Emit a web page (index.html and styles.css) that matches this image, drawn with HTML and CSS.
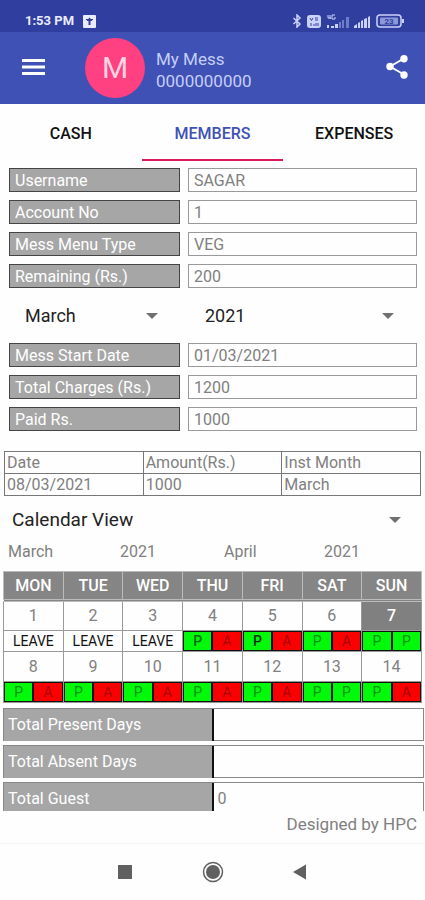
FILE: index.html
```html
<!DOCTYPE html>
<html lang="en">
<head>
<meta charset="utf-8">
<meta name="viewport" content="width=device-width, initial-scale=1">
<title>My Mess</title>
<link rel="stylesheet" href="styles.css">
</head>
<body>
<div class="app">
  <div class="status">
    <span class="clock">1:53 PM</span>
    <svg class="notice" width="13" height="13" viewBox="0 0 13 13"><rect width="13" height="13" rx="1" fill="#e9ecff"/><path d="M6.500 2.500 9.500 6H7.500v4h-2V6h-2z" fill="#303f9f"/><path d="M3 4.500h7" stroke="#303f9f"/></svg>
    <div class="signals">
      <svg width="10" height="14" viewBox="0 0 10 14" fill="none" stroke="#cbd2fa" stroke-width="1.500"><path d="M1.500 4 8 10 5 13V1l3 3-6.500 6"/></svg>
      <svg width="14" height="13" viewBox="0 0 14 13"><rect width="14" height="13" rx="3" fill="#cbd2fa"/><path d="M3 3l1.500 2.500L6 3M8 3h3M8 5h3M4 8v3M6 10h2M9 8v3M11 8v3" stroke="#303f9f" fill="none"/></svg>
      <svg width="23" height="15" viewBox="0 0 23 15"><path d="M2 1v3h3M4 1v4M9 1H6v4h3V3" stroke="#cbd2fa" fill="none"/><path d="M1 11h2v3H1zM5 12h3v2H5zM9 10h3v4H9z" fill="#cbd2fa"/><path d="M13 8h2v6h-2zM16 6h2v8h-2zM20 3h3v11h-3z" fill="#6f7cc7"/></svg>
      <svg width="17" height="13" viewBox="0 0 17 13" fill="#cbd2fa"><path d="M0 13v-2l3-2v4zM4 13V8l2-1v6zM7 13V6l2-1v8zM10 13V4l3-1v10zM14 13V2l2-1v12z"/></svg>
      <svg width="29" height="14" viewBox="0 0 29 14"><rect x="1" y="1" width="24" height="12" rx="3" fill="none" stroke="#cbd2fa" stroke-width="1.500"/><rect x="4" y="3.500" width="18" height="7" rx="1" fill="#8d98d8"/><path d="M26 5h2v4h-2z" fill="#cbd2fa"/><text x="13" y="10" text-anchor="middle" class="battery-text">23</text></svg>
    </div>
  </div>
  <header class="bar">
    <button class="icon-button" type="button" aria-label="Menu"><svg width="24" height="18" viewBox="0 0 24 18" fill="#fff"><path d="M0 0h23v3H0zM0 6.500h23v3H0zM0 13h23v3H0z"/></svg></button>
    <span class="avatar">M</span>
    <div class="account"><span>My Mess</span><span>0000000000</span></div>
    <button class="icon-button" type="button" aria-label="Share"><svg width="24" height="26" viewBox="0 0 24 26"><path d="M19 3.500 5 11.500l14 8" fill="none" stroke="#fff" stroke-width="2"/><g fill="#fff"><circle cx="19" cy="3.800" r="3.700"/><circle cx="5" cy="11.500" r="3.700"/><circle cx="19" cy="20" r="3.700"/></g></svg></button>
  </header>
  <nav class="tabs">
    <a href="#cash">CASH</a>
    <a href="#members" class="current" aria-current="page">MEMBERS</a>
    <a href="#expenses">EXPENSES</a>
  </nav>
  <main class="content">
    <section class="fields">
      <label for="username">Username</label><input id="username" value="SAGAR" readonly>
      <label for="account">Account No</label><input id="account" value="1" readonly>
      <label for="menu">Mess Menu Type</label><input id="menu" value="VEG" readonly>
      <label for="remaining">Remaining (Rs.)</label><input id="remaining" value="200" readonly>
    </section>
    <section class="period">
      <div class="spinner"><select aria-label="Month"><option>March</option></select></div>
      <div class="spinner"><select aria-label="Year"><option>2021</option></select></div>
    </section>
    <section class="fields">
      <label for="start">Mess Start Date</label><input id="start" value="01/03/2021" readonly>
      <label for="charges">Total Charges (Rs.)</label><input id="charges" value="1200" readonly>
      <label for="paid">Paid Rs.</label><input id="paid" value="1000" readonly>
    </section>
    <table class="payments">
      <thead><tr><th>Date</th><th>Amount(Rs.)</th><th>Inst Month</th></tr></thead>
      <tbody><tr><td>08/03/2021</td><td>1000</td><td>March</td></tr></tbody>
    </table>
    <div class="spinner view"><select aria-label="View"><option>Calendar View</option></select></div>
    <div class="range"><span>March</span><span>2021</span><span>April</span><span>2021</span></div>
    <table class="calendar">
      <thead><tr><th>MON</th><th>TUE</th><th>WED</th><th>THU</th><th>FRI</th><th>SAT</th><th>SUN</th></tr></thead>
      <tbody>
        <tr class="days"><td>1</td><td>2</td><td>3</td><td>4</td><td>5</td><td>6</td><td class="today">7</td></tr>
        <tr class="marks">
          <td>LEAVE</td><td>LEAVE</td><td>LEAVE</td>
          <td><div class="pair"><b class="p strong">P</b><b class="a">A</b></div></td>
          <td><div class="pair"><b class="p dark">P</b><b class="a">A</b></div></td>
          <td><div class="pair"><b class="p">P</b><b class="a">A</b></div></td>
          <td><div class="pair"><b class="p">P</b><b class="p">P</b></div></td>
        </tr>
        <tr class="days"><td>8</td><td>9</td><td>10</td><td>11</td><td>12</td><td>13</td><td>14</td></tr>
        <tr class="marks">
          <td><div class="pair"><b class="p">P</b><b class="a">A</b></div></td>
          <td><div class="pair"><b class="p">P</b><b class="a">A</b></div></td>
          <td><div class="pair"><b class="p">P</b><b class="a">A</b></div></td>
          <td><div class="pair"><b class="p">P</b><b class="a">A</b></div></td>
          <td><div class="pair"><b class="p">P</b><b class="a">A</b></div></td>
          <td><div class="pair"><b class="p">P</b><b class="p">P</b></div></td>
          <td><div class="pair"><b class="p">P</b><b class="a">A</b></div></td>
        </tr>
      </tbody>
    </table>
    <section class="totals">
      <div class="total"><label for="present">Total Present Days</label><input id="present" readonly></div>
      <div class="total"><label for="absent">Total Absent Days</label><input id="absent" readonly></div>
      <div class="total"><label for="guest">Total Guest</label><input id="guest" value="0" readonly></div>
    </section>
  </main>
  <footer class="credit">Designed by HPC</footer>
  <div class="system">
    <button type="button" aria-label="Recent apps"><svg width="22" height="22" viewBox="0 0 22 22"><path d="M4 4h14v14H4z" fill="#606060"/></svg></button>
    <button type="button" aria-label="Home"><svg width="22" height="22" viewBox="0 0 22 22"><circle cx="11" cy="11" r="9.500" fill="none" stroke="#606060" stroke-width="1.500"/><circle cx="11" cy="11" r="7" fill="#606060"/></svg></button>
    <button type="button" aria-label="Back"><svg width="22" height="22" viewBox="0 0 22 22"><path d="M16 3.500v15L3 11z" fill="#606060"/></svg></button>
  </div>
</div>
</body>
</html>
```
FILE: styles.css
```css
* { box-sizing: border-box; }
body { margin: 0; background: #fefefe; color: #808080; font: 16px/20px Roboto, sans-serif; }
button, input, select { font: inherit; color: inherit; border: 0; padding: 0; margin: 0; background: none; border-radius: 0; }
svg { display: block; }
.app { display: flex; flex-direction: column; height: 100vh; }

.status { display: flex; align-items: center; height: 32px; padding: 10px 20px 0 25px; background: #303f9f; color: #e9ecff; }
.clock { font-size: 13px; font-weight: 700; }
.notice { margin-left: 9px; }
.signals { display: flex; align-items: center; gap: 5px; margin-left: auto; }
.battery-text { font-size: 8px; font-weight: 700; fill: #303f9f; }

.bar { display: flex; align-items: center; height: 72px; padding: 0 16px 0 22px; background: #3f51b5; }
.icon-button { display: flex; }
.avatar { display: grid; place-items: center; width: 60px; height: 60px; margin: 0 11px 0 39px; border-radius: 50%; background: #ff4081; color: #ffd3e2; font-size: 30px; }
.account { display: flex; flex: 1; flex-direction: column; gap: 2px; padding-top: 3px; color: #c5cefa; font-size: 17px; }

.tabs { display: grid; grid-template-columns: repeat(3, 1fr); height: 57px; }
.tabs a { display: grid; place-items: center; padding-top: 4px; border-bottom: 2px solid transparent; color: #111; font-weight: 500; text-decoration: none; }
.tabs .current { border-color: #d81b60; color: #3f51b5; }

.content { flex: 1; min-height: 0; overflow: hidden; padding-top: 7px; }
.fields { display: grid; grid-template-columns: 171px 1fr; gap: 8px; padding: 0 8px 0 9px; }
.fields label { height: 24px; padding: 2px 5px 0; border: 1px solid #444; background: #a6a6a6; color: #fff; line-height: 20px; }
.fields input { height: 24px; min-width: 0; padding: 1px 5px 0; border: 1px solid #999; }

.period { display: grid; grid-template-columns: 180px 1fr; height: 55px; }
.spinner { display: grid; grid-template-columns: 1fr 12px; align-items: center; padding: 0 22px 0 25px; color: #222; font-size: 18px; }
.spinner select { grid-area: 1 / 1 / 2 / 3; appearance: none; width: 100%; }
.spinner::after { content: ""; grid-area: 1 / 2; border: 6px solid transparent; border-top-color: #707070; border-bottom: 0; pointer-events: none; }

.payments { width: calc(100% - 8px); margin: 20px 4px 0; border-collapse: collapse; table-layout: fixed; }
.payments th, .payments td { height: 22px; padding: 0 2px; border: 1px solid #777; font-weight: 400; text-align: left; }
.view { height: 46px; padding: 2px 24px 0 12px; font-size: 19px; }
.range { display: grid; grid-template-columns: 112px 104px 100px 1fr; height: 29px; padding: 0 8px; }
.period .spinner + .spinner { padding-right: 31px; }

.calendar { width: calc(100% - 6px); margin: 0 3px; border-collapse: collapse; table-layout: fixed; text-align: center; }
.calendar th, .calendar td { padding: 0; border: 1px solid #999; }
.calendar th { height: 29px; border-color: #bbb; border-bottom: 3px double #bbb; background: #858585; color: #fff; font-weight: 500; }
.days td { height: 30px; }
.days .today { background: #808080; color: #fff; font-weight: 500; }
.marks td { height: 21px; color: #111; font-size: 14px; line-height: 20px; }
.pair { display: grid; grid-template-columns: 1fr 1fr; gap: 2px; border: 1px solid #111; background: #111; }
.pair b { font-weight: 400; line-height: 18px; }
.p { background: #00fa0a; color: #068f0e; }
.a { background: #fa0000; color: #a80000; }
.pair .strong { color: #056b0a; font-weight: 500; }
.pair .dark { color: #032f05; font-weight: 500; }

.totals { display: grid; gap: 4px; padding: 5px 1px 0 3px; }
.total { display: grid; grid-template-columns: 1fr 1fr; height: 33px; border: 1px solid #888; }
.total label { padding: 6px 4px; border-right: 2px solid #111; background: #a6a6a6; color: #fff; }
.total input { min-width: 0; padding: 0 4px; }

.credit { padding: 3px 8px 9px; font-size: 17px; text-align: right; }
.system { display: flex; justify-content: center; align-items: center; gap: 66px; height: 57px; border-top: 1px solid #f4f4f4; }
```
